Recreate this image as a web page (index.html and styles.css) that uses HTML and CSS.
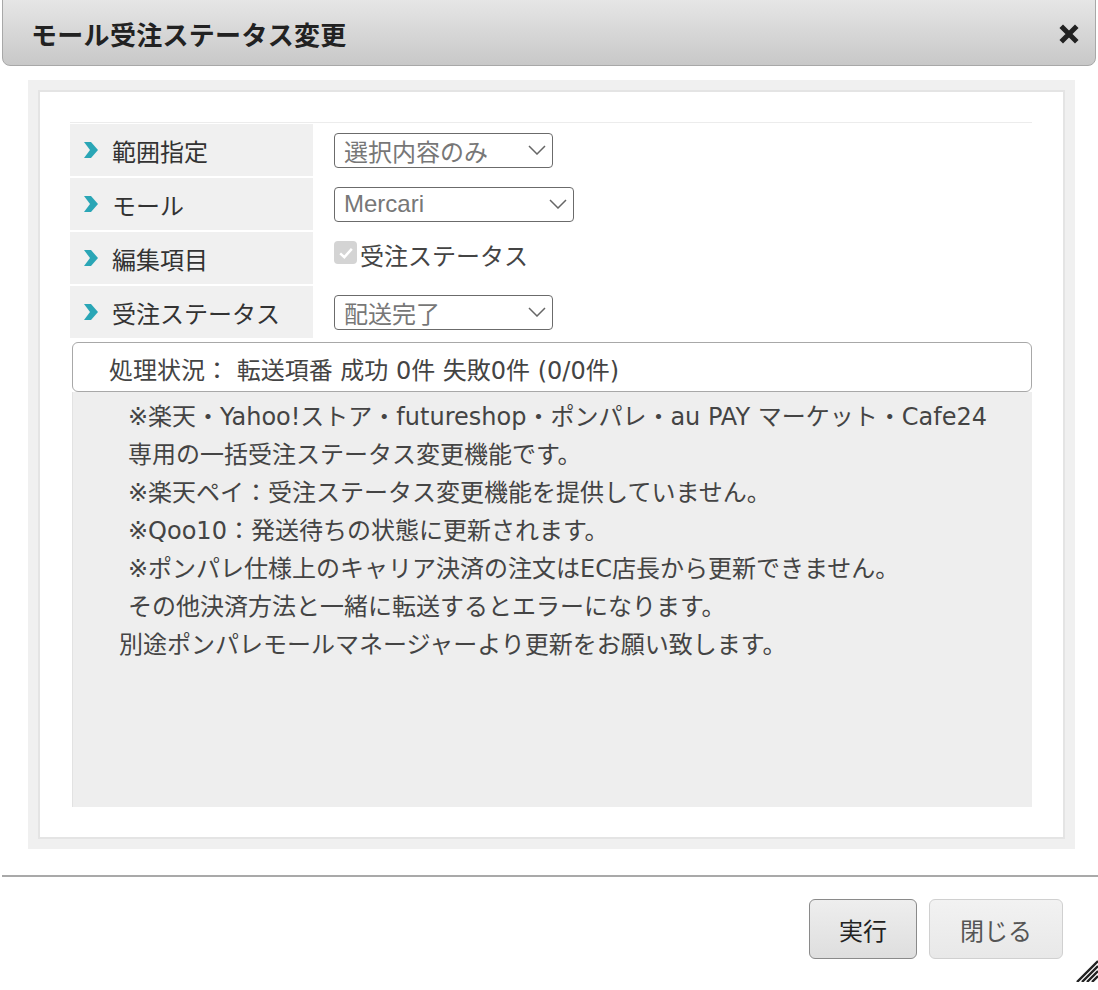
FILE: index.html
```html
<!DOCTYPE html>
<html lang="ja">
<head>
<meta charset="utf-8">
<title>モール受注ステータス変更</title>
<link rel="stylesheet" href="styles.css">
</head>
<body>
<div class="dialog">
  <div class="titlebar">
    <h1 class="title">モール受注ステータス変更</h1>
    <svg class="close" viewBox="0 0 20 20" width="20" height="20" aria-label="閉じる">
      <path d="M4 4 L16 16 M16 4 L4 16" stroke="#222" stroke-width="5" stroke-linecap="square"/>
    </svg>
  </div>
  <div class="content">
    <div class="outer">
      <div class="inner">
        <div class="form">
          <div class="row">
            <div class="label"><svg class="arrow" viewBox="0 0 14 16"><path d="M0 0 L7 0 L14 8 L7 16 L0 16 L6 8 Z" fill="#2aa6b6"/></svg>範囲指定</div>
            <div class="value">
              <div class="select s1"><span>選択内容のみ</span><svg class="chev" viewBox="0 0 18 10"><path d="M1 1 L9 9 L17 1" fill="none" stroke="#666" stroke-width="1.5"/></svg></div>
            </div>
          </div>
          <div class="row">
            <div class="label"><svg class="arrow" viewBox="0 0 14 16"><path d="M0 0 L7 0 L14 8 L7 16 L0 16 L6 8 Z" fill="#2aa6b6"/></svg>モール</div>
            <div class="value">
              <div class="select s2"><span>Mercari</span><svg class="chev" viewBox="0 0 18 10"><path d="M1 1 L9 9 L17 1" fill="none" stroke="#666" stroke-width="1.5"/></svg></div>
            </div>
          </div>
          <div class="row">
            <div class="label"><svg class="arrow" viewBox="0 0 14 16"><path d="M0 0 L7 0 L14 8 L7 16 L0 16 L6 8 Z" fill="#2aa6b6"/></svg>編集項目</div>
            <div class="value check-cell">
              <span class="checkbox"><svg viewBox="0 0 24 24"><path d="M5 12.5 L10 17 L19 7" fill="none" stroke="#fff" stroke-width="3"/></svg></span><span class="check-text">受注ステータス</span>
            </div>
          </div>
          <div class="row">
            <div class="label"><svg class="arrow" viewBox="0 0 14 16"><path d="M0 0 L7 0 L14 8 L7 16 L0 16 L6 8 Z" fill="#2aa6b6"/></svg>受注ステータス</div>
            <div class="value">
              <div class="select s1"><span>配送完了</span><svg class="chev" viewBox="0 0 18 10"><path d="M1 1 L9 9 L17 1" fill="none" stroke="#666" stroke-width="1.5"/></svg></div>
            </div>
          </div>
        </div>
        <div class="status">処理状況： 転送項番 成功 0件 失敗0件 (0/0件)</div>
        <div class="notes">
          <p class="ind">※楽天・Yahoo!ストア・futureshop・ポンパレ・au PAY マーケット・Cafe24</p>
          <p class="ind">専用の一括受注ステータス変更機能です。</p>
          <p class="ind">※楽天ペイ：受注ステータス変更機能を提供していません。</p>
          <p class="ind">※Qoo10：発送待ちの状態に更新されます。</p>
          <p class="ind">※ポンパレ仕様上のキャリア決済の注文はEC店長から更新できません。</p>
          <p class="ind">その他決済方法と一緒に転送するとエラーになります。</p>
          <p>別途ポンパレモールマネージャーより更新をお願い致します。</p>
        </div>
      </div>
    </div>
  </div>
  <div class="rule"></div>
  <div class="buttons">
    <button class="btn primary">実行</button>
    <button class="btn secondary">閉じる</button>
  </div>
  <svg class="grip" viewBox="0 0 24 24" width="24" height="24">
    <path d="M24 3 L3 24 M24 8 L8 24 M24 13 L13 24 M24 18 L18 24" stroke="#222" stroke-width="2.4"/>
  </svg>
</div>
</body>
</html>
```

FILE: styles.css
```css
html, body {
  margin: 0;
  padding: 0;
  background: #ffffff;
}

body {
  font-family: "Noto Sans CJK JP", "Noto Sans", sans-serif;
  color: #333;
  width: 1098px;
  height: 990px;
  overflow: hidden;
}

.dialog {
  position: relative;
  width: 1098px;
  height: 990px;
}

.titlebar {
  margin: -8px 2px 0 2px;
  height: 74px;
  box-sizing: border-box;
  padding-top: 8px;
  border: 1px solid #a8a8a8;
  border-radius: 8px;
  background: linear-gradient(#e9e9e9, #c8c8c8);
  display: flex;
  align-items: center;
  justify-content: space-between;
  padding-left: 28px;
  padding-right: 16px;
}

.title {
  margin: 0;
  font-size: 26px;
  font-weight: bold;
  color: #222;
  letter-spacing: 0.3px;
}

.close {
  width: 20px;
  height: 20px;
  margin-top: 2px;
}

.content {
  padding: 14px 23px 0 28px;
}

.outer {
  background: #f0f0f0;
  padding: 10px;
}

.inner {
  background: #fff;
  border: 2px solid #e4e4e4;
  padding: 30px 31px 30px 30px;
}

.form {
  border-top: 1px solid #ececec;
  padding-top: 1px;
  display: flex;
  flex-direction: column;
  gap: 2px;
}

.row {
  display: flex;
  height: 52px;
}

.label {
  width: 243px;
  background: #f0f0f0;
  display: flex;
  align-items: center;
  padding-left: 14px;
  box-sizing: border-box;
  font-size: 24px;
  color: #333;
}

.arrow {
  width: 14px;
  height: 16px;
  margin-right: 14px;
}

.value {
  flex: 1;
  display: flex;
  align-items: center;
  padding-left: 21px;
}

.select {
  height: 35px;
  box-sizing: border-box;
  border: 1.5px solid #6b6b6b;
  border-radius: 4px;
  display: flex;
  align-items: center;
  justify-content: space-between;
  padding: 0 6px 0 9px;
  font-family: "Liberation Sans", "Noto Sans CJK JP", sans-serif;
  font-size: 24px;
  color: #777;
  background: #fff;
}

.s1 { width: 219px; }
.s2 { width: 240px; }

.chev {
  width: 18px;
  height: 10px;
}

.check-cell {
  align-items: flex-start;
  padding-top: 8px;
}

.checkbox {
  width: 23px;
  height: 23px;
  border-radius: 4px;
  background: #d4d4d4;
  display: inline-flex;
  align-items: center;
  justify-content: center;
  margin-top: 1px;
}

.checkbox svg {
  width: 20px;
  height: 20px;
}

.check-text {
  font-size: 24px;
  color: #444;
  margin-left: 3px;
  line-height: 30px;
}

.status {
  margin: 4px 0 0 2px;
  height: 50px;
  box-sizing: border-box;
  border: 1.5px solid #a8a8a8;
  border-radius: 6px;
  background: #fff;
  display: flex;
  align-items: center;
  padding-left: 36px;
  padding-top: 3px;
  font-family: "DejaVu Sans", "Noto Sans CJK JP", sans-serif;
  font-size: 24px;
  color: #444;
  white-space: pre;
}

.notes {
  margin-left: 2px;
  background: #eeeeee;
  height: 415px;
  box-sizing: border-box;
  padding: 6px 0 0 46px;
  border-left: 1px solid #e2e2e2;
  font-family: "DejaVu Sans", "Noto Sans CJK JP", sans-serif;
  font-size: 24px;
  color: #444;
}

.notes p {
  margin: 0;
  line-height: 38px;
}

.notes p.ind {
  padding-left: 9px;
}

.rule {
  margin: 26px 0 0 2px;
  height: 2px;
  background: #a9a9a9;
}

.buttons {
  display: flex;
  justify-content: flex-end;
  gap: 12px;
  padding: 22px 35px 0 0;
}

.btn {
  height: 60px;
  border-radius: 6px;
  font-family: "Noto Sans CJK JP", "Noto Sans", sans-serif;
  font-size: 24px;
  padding: 0;
  cursor: pointer;
}

.primary {
  width: 108px;
  border: 1.5px solid #8a8a8a;
  background: linear-gradient(#eeeeee, #dedede);
  color: #222;
}

.secondary {
  width: 134px;
  border: 1.5px solid #d0d0d0;
  background: linear-gradient(#f2f2f2, #e8e8e8);
  color: #555;
}

.grip {
  position: absolute;
  right: 0;
  bottom: 0;
}
```
